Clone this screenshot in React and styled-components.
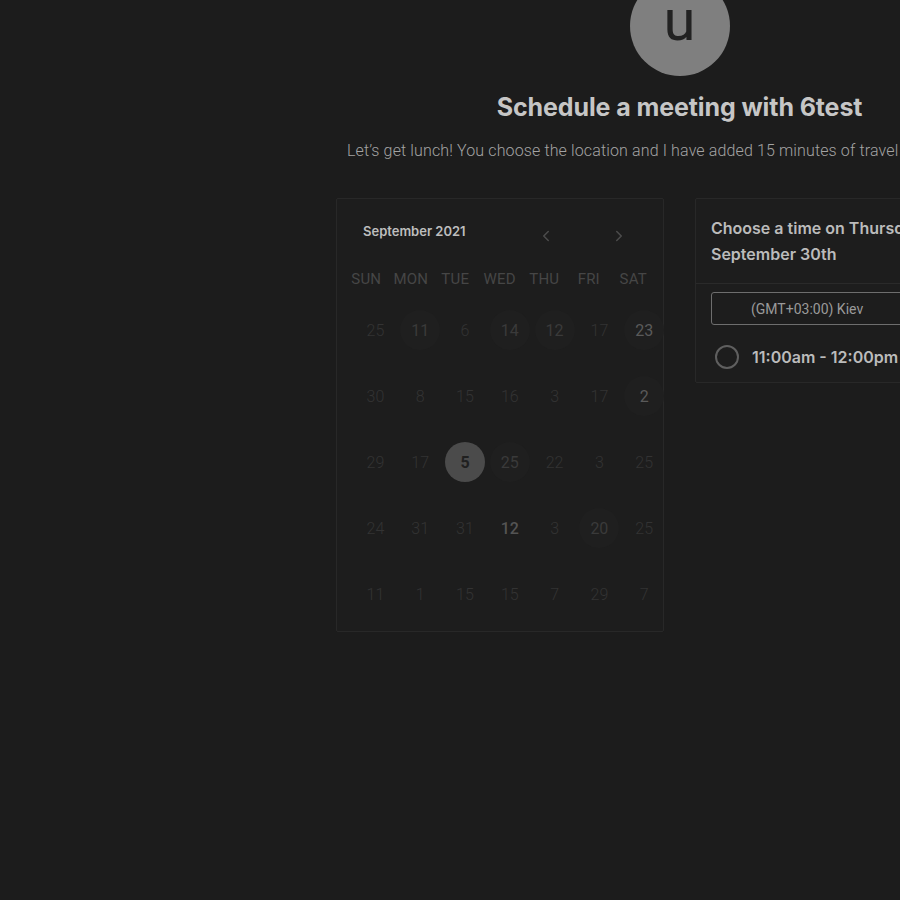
import React from "react";
import styled, { createGlobalStyle } from "styled-components";
import { ChevronLeft, ChevronRight } from "lucide-react";

const GlobalStyle = createGlobalStyle`
  html, body {
    margin: 0;
    padding: 0;
    background: #1c1c1c;
    overflow: hidden;
  }
  body {
    font-family: "Roboto", "Liberation Sans", sans-serif;
  }
`;

const Page = styled.div`
  width: 900px;
  height: 900px;
  overflow: hidden;
  background: #1c1c1c;
`;

const Wrapper = styled.div`
  width: 687px;
  margin-left: 336px;
  display: flex;
  flex-direction: column;
  align-items: center;
`;

const Avatar = styled.div`
  width: 100px;
  height: 100px;
  margin-top: -24px;
  border-radius: 50%;
  background: #7f7f7f;
  color: #222;
  display: flex;
  justify-content: center;
  align-items: center;
  font-family: "Roboto", sans-serif;
  font-size: 58px;
  line-height: 1;
  & > span {
    transform: translateY(-6px);
  }
`;

const Title = styled.h1`
  margin: 16px 0 0;
  font-family: "Inter", sans-serif;
  font-weight: 700;
  font-size: 25px;
  line-height: 30px;
  color: #c6c6c6;
  letter-spacing: -0.1px;
`;

const Subtitle = styled.p`
  align-self: stretch;
  margin: 19px 0 0;
  padding-left: 11px;
  font-family: "Roboto", sans-serif;
  font-weight: 300;
  font-size: 16px;
  line-height: 20px;
  letter-spacing: 0.13px;
  color: #a3a3a3;
  white-space: nowrap;
`;

const Columns = styled.div`
  align-self: stretch;
  margin-top: 37px;
  display: flex;
  align-items: flex-start;
  gap: 31px;
`;

const Card = styled.div`
  width: 328px;
  box-sizing: border-box;
  border: 1px solid #282828;
  border-radius: 2px;
  background: #1d1d1d;
`;

const Calendar = styled(Card)`
  height: 434px;
  padding: 19px 7px 0;
`;

const CalHeader = styled.div`
  display: flex;
  justify-content: space-between;
  align-items: center;
  height: 26px;
  padding: 0 27px 0 19px;
`;

const Month = styled.div`
  font-family: "Inter", sans-serif;
  font-weight: 600;
  font-size: 13px;
  color: #bdbdbd;
`;

const Nav = styled.div`
  display: flex;
  gap: 53px;
  margin-top: 10px;
`;

const NavButton = styled.div`
  width: 20px;
  height: 20px;
  display: flex;
  align-items: center;
  justify-content: center;
  color: #4c4c4c;
`;

const Weekdays = styled.div`
  margin-top: 25px;
  display: grid;
  grid-template-columns: repeat(7, 44.5px);
  height: 20px;
`;

const Weekday = styled.div`
  text-align: center;
  font-family: "Roboto", sans-serif;
  font-size: 15px;
  line-height: 20px;
  color: #464646;
  letter-spacing: 0.2px;
`;

const Days = styled.div`
  margin-top: 8px;
  margin-left: 9px;
  display: grid;
  grid-template-columns: repeat(7, 44.8px);
  grid-auto-rows: 66px;
`;

const tones = {
  dim: { color: "#333333", weight: 300, bg: "transparent" },
  open: { color: "#3a3a3a", weight: 400, bg: "#1f1f1f" },
  lit: { color: "#5a5a5a", weight: 400, bg: "#1f1f1f" },
  bold: { color: "#545454", weight: 500, bg: "transparent" },
  picked: { color: "#202020", weight: 700, bg: "#4b4b4b" },
};

const Day = styled.div`
  display: flex;
  align-items: center;
  justify-content: center;
  & > span {
    width: 40px;
    height: 40px;
    border-radius: 50%;
    display: flex;
    align-items: center;
    justify-content: center;
    font-family: "Roboto", sans-serif;
    font-size: 16px;
    color: ${(p) => tones[p.$tone].color};
    font-weight: ${(p) => tones[p.$tone].weight};
    background: ${(p) => tones[p.$tone].bg};
  }
`;

const TimePanel = styled(Card)`
  height: 185px;
`;

const PanelTitle = styled.div`
  padding: 16px 15px 16px;
  border-bottom: 1px solid #2a2a2a;
  font-family: "Inter", sans-serif;
  font-weight: 600;
  font-size: 16px;
  line-height: 26px;
  color: #bbbbbb;
`;

const PanelBody = styled.div`
  padding: 8px 15px 0;
`;

const Zone = styled.div`
  height: 33px;
  box-sizing: border-box;
  border: 1px solid #6e6e6e;
  border-radius: 3px;
  padding-left: 39px;
  display: flex;
  align-items: center;
  font-family: "Roboto", sans-serif;
  font-size: 14px;
  color: #9a9a9a;
`;

const Slot = styled.div`
  margin-top: 20px;
  display: flex;
  align-items: center;
  gap: 13px;
  padding-left: 4px;
`;

const Radio = styled.div`
  width: 24px;
  height: 24px;
  box-sizing: border-box;
  border-radius: 50%;
  border: 2px solid #5f5f5f;
`;

const SlotText = styled.div`
  font-family: "Inter", sans-serif;
  font-weight: 600;
  font-size: 16px;
  color: #bbbbbb;
`;

const weekdays = ["SUN", "MON", "TUE", "WED", "THU", "FRI", "SAT"];

const rows = [
  [["25", "dim"], ["11", "open"], ["6", "dim"], ["14", "open"], ["12", "open"], ["17", "dim"], ["23", "lit"]],
  [["30", "dim"], ["8", "dim"], ["15", "dim"], ["16", "dim"], ["3", "dim"], ["17", "dim"], ["2", "lit"]],
  [["29", "dim"], ["17", "dim"], ["5", "picked"], ["25", "open"], ["22", "dim"], ["3", "dim"], ["25", "dim"]],
  [["24", "dim"], ["31", "dim"], ["31", "dim"], ["12", "bold"], ["3", "dim"], ["20", "open"], ["25", "dim"]],
  [["11", "dim"], ["1", "dim"], ["15", "dim"], ["15", "dim"], ["7", "dim"], ["29", "dim"], ["7", "dim"]],
];

const App = () => {
  return (
    <Page>
      <GlobalStyle />
      <Wrapper>
        <Avatar>
          <span>u</span>
        </Avatar>
        <Title>Schedule a meeting with 6test</Title>
        <Subtitle>
          Let’s get lunch! You choose the location and I have added 15 minutes of travel time to the meeting.
        </Subtitle>
        <Columns>
          <Calendar>
            <CalHeader>
              <Month>September 2021</Month>
              <Nav>
                <NavButton>
                  <ChevronLeft size={18} strokeWidth={2} />
                </NavButton>
                <NavButton>
                  <ChevronRight size={18} strokeWidth={2} />
                </NavButton>
              </Nav>
            </CalHeader>
            <Weekdays>
              {weekdays.map((d) => (
                <Weekday key={d}>{d}</Weekday>
              ))}
            </Weekdays>
            <Days>
              {rows.flat().map(([n, tone], i) => (
                <Day key={i} $tone={tone}>
                  <span>{n}</span>
                </Day>
              ))}
            </Days>
          </Calendar>
          <TimePanel>
            <PanelTitle>
              Choose a time on Thursday,
              <br />
              September 30th
            </PanelTitle>
            <PanelBody>
              <Zone>(GMT+03:00) Kiev</Zone>
              <Slot>
                <Radio />
                <SlotText>11:00am - 12:00pm</SlotText>
              </Slot>
            </PanelBody>
          </TimePanel>
        </Columns>
      </Wrapper>
    </Page>
  );
};

export default App;
